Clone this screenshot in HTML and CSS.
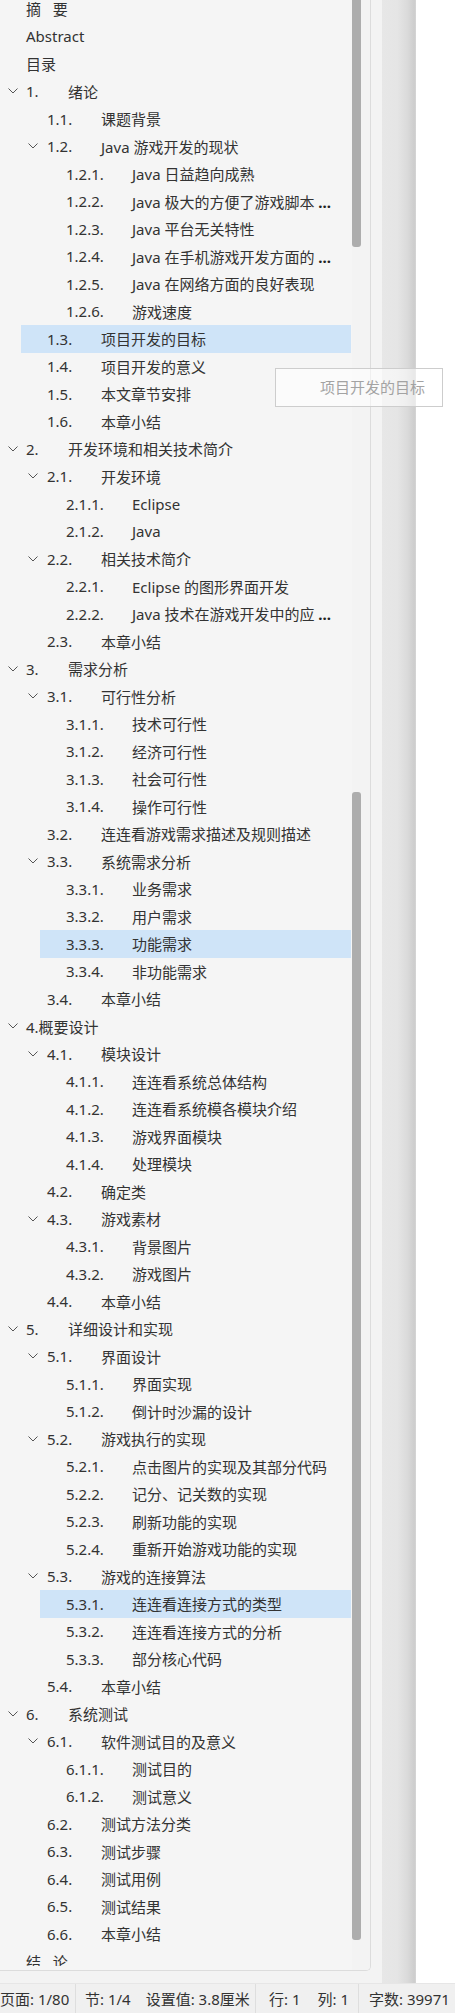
FILE: index.html
```html
<!DOCTYPE html>
<html lang="zh-CN">
<head>
  <meta charset="UTF-8">
  <title>导航窗格</title>
  <link rel="stylesheet" href="styles.css">
</head>
<body>
  <div class="main">
    <div class="left">
      <div class="panel">
        <div class="tree">
          <div class="row l0"><span class="title">摘&nbsp;&nbsp;&nbsp;要</span></div>
          <div class="row l0"><span class="title">Abstract</span></div>
          <div class="row l0"><span class="title">目录</span></div>
          <div class="row l1"><span class="chev"><svg width="10" height="6" viewBox="0 0 10 6"><path d="M0.5 0.5 L5 5 L9.5 0.5"/></svg></span><span class="num">1.</span><span class="title">绪论</span></div>
          <div class="row l2"><span class="chev"></span><span class="num">1.1.</span><span class="title">课题背景</span></div>
          <div class="row l2"><span class="chev"><svg width="10" height="6" viewBox="0 0 10 6"><path d="M0.5 0.5 L5 5 L9.5 0.5"/></svg></span><span class="num">1.2.</span><span class="title">Java 游戏开发的现状</span></div>
          <div class="row l3"><span class="chev"></span><span class="num">1.2.1.</span><span class="title">Java 日益趋向成熟</span></div>
          <div class="row l3"><span class="chev"></span><span class="num">1.2.2.</span><span class="title">Java 极大的方便了游戏脚本 <b>...</b></span></div>
          <div class="row l3"><span class="chev"></span><span class="num">1.2.3.</span><span class="title">Java 平台无关特性</span></div>
          <div class="row l3"><span class="chev"></span><span class="num">1.2.4.</span><span class="title">Java 在手机游戏开发方面的 <b>...</b></span></div>
          <div class="row l3"><span class="chev"></span><span class="num">1.2.5.</span><span class="title">Java 在网络方面的良好表现</span></div>
          <div class="row l3"><span class="chev"></span><span class="num">1.2.6.</span><span class="title">游戏速度</span></div>
          <div class="row l2 sel"><span class="chev"></span><span class="num">1.3.</span><span class="title">项目开发的目标</span></div>
          <div class="row l2"><span class="chev"></span><span class="num">1.4.</span><span class="title">项目开发的意义</span></div>
          <div class="row l2"><span class="chev"></span><span class="num">1.5.</span><span class="title">本文章节安排</span></div>
          <div class="row l2"><span class="chev"></span><span class="num">1.6.</span><span class="title">本章小结</span></div>
          <div class="row l1"><span class="chev"><svg width="10" height="6" viewBox="0 0 10 6"><path d="M0.5 0.5 L5 5 L9.5 0.5"/></svg></span><span class="num">2.</span><span class="title">开发环境和相关技术简介</span></div>
          <div class="row l2"><span class="chev"><svg width="10" height="6" viewBox="0 0 10 6"><path d="M0.5 0.5 L5 5 L9.5 0.5"/></svg></span><span class="num">2.1.</span><span class="title">开发环境</span></div>
          <div class="row l3"><span class="chev"></span><span class="num">2.1.1.</span><span class="title">Eclipse</span></div>
          <div class="row l3"><span class="chev"></span><span class="num">2.1.2.</span><span class="title">Java</span></div>
          <div class="row l2"><span class="chev"><svg width="10" height="6" viewBox="0 0 10 6"><path d="M0.5 0.5 L5 5 L9.5 0.5"/></svg></span><span class="num">2.2.</span><span class="title">相关技术简介</span></div>
          <div class="row l3"><span class="chev"></span><span class="num">2.2.1.</span><span class="title">Eclipse 的图形界面开发</span></div>
          <div class="row l3"><span class="chev"></span><span class="num">2.2.2.</span><span class="title">Java 技术在游戏开发中的应 <b>...</b></span></div>
          <div class="row l2"><span class="chev"></span><span class="num">2.3.</span><span class="title">本章小结</span></div>
          <div class="row l1"><span class="chev"><svg width="10" height="6" viewBox="0 0 10 6"><path d="M0.5 0.5 L5 5 L9.5 0.5"/></svg></span><span class="num">3.</span><span class="title">需求分析</span></div>
          <div class="row l2"><span class="chev"><svg width="10" height="6" viewBox="0 0 10 6"><path d="M0.5 0.5 L5 5 L9.5 0.5"/></svg></span><span class="num">3.1.</span><span class="title">可行性分析</span></div>
          <div class="row l3"><span class="chev"></span><span class="num">3.1.1.</span><span class="title">技术可行性</span></div>
          <div class="row l3"><span class="chev"></span><span class="num">3.1.2.</span><span class="title">经济可行性</span></div>
          <div class="row l3"><span class="chev"></span><span class="num">3.1.3.</span><span class="title">社会可行性</span></div>
          <div class="row l3"><span class="chev"></span><span class="num">3.1.4.</span><span class="title">操作可行性</span></div>
          <div class="row l2"><span class="chev"></span><span class="num">3.2.</span><span class="title">连连看游戏需求描述及规则描述</span></div>
          <div class="row l2"><span class="chev"><svg width="10" height="6" viewBox="0 0 10 6"><path d="M0.5 0.5 L5 5 L9.5 0.5"/></svg></span><span class="num">3.3.</span><span class="title">系统需求分析</span></div>
          <div class="row l3"><span class="chev"></span><span class="num">3.3.1.</span><span class="title">业务需求</span></div>
          <div class="row l3"><span class="chev"></span><span class="num">3.3.2.</span><span class="title">用户需求</span></div>
          <div class="row l3 sel"><span class="chev"></span><span class="num">3.3.3.</span><span class="title">功能需求</span></div>
          <div class="row l3"><span class="chev"></span><span class="num">3.3.4.</span><span class="title">非功能需求</span></div>
          <div class="row l2"><span class="chev"></span><span class="num">3.4.</span><span class="title">本章小结</span></div>
          <div class="row l1"><span class="chev"><svg width="10" height="6" viewBox="0 0 10 6"><path d="M0.5 0.5 L5 5 L9.5 0.5"/></svg></span><span class="title">4.概要设计</span></div>
          <div class="row l2"><span class="chev"><svg width="10" height="6" viewBox="0 0 10 6"><path d="M0.5 0.5 L5 5 L9.5 0.5"/></svg></span><span class="num">4.1.</span><span class="title">模块设计</span></div>
          <div class="row l3"><span class="chev"></span><span class="num">4.1.1.</span><span class="title">连连看系统总体结构</span></div>
          <div class="row l3"><span class="chev"></span><span class="num">4.1.2.</span><span class="title">连连看系统模各模块介绍</span></div>
          <div class="row l3"><span class="chev"></span><span class="num">4.1.3.</span><span class="title">游戏界面模块</span></div>
          <div class="row l3"><span class="chev"></span><span class="num">4.1.4.</span><span class="title">处理模块</span></div>
          <div class="row l2"><span class="chev"></span><span class="num">4.2.</span><span class="title">确定类</span></div>
          <div class="row l2"><span class="chev"><svg width="10" height="6" viewBox="0 0 10 6"><path d="M0.5 0.5 L5 5 L9.5 0.5"/></svg></span><span class="num">4.3.</span><span class="title">游戏素材</span></div>
          <div class="row l3"><span class="chev"></span><span class="num">4.3.1.</span><span class="title">背景图片</span></div>
          <div class="row l3"><span class="chev"></span><span class="num">4.3.2.</span><span class="title">游戏图片</span></div>
          <div class="row l2"><span class="chev"></span><span class="num">4.4.</span><span class="title">本章小结</span></div>
          <div class="row l1"><span class="chev"><svg width="10" height="6" viewBox="0 0 10 6"><path d="M0.5 0.5 L5 5 L9.5 0.5"/></svg></span><span class="num">5.</span><span class="title">详细设计和实现</span></div>
          <div class="row l2"><span class="chev"><svg width="10" height="6" viewBox="0 0 10 6"><path d="M0.5 0.5 L5 5 L9.5 0.5"/></svg></span><span class="num">5.1.</span><span class="title">界面设计</span></div>
          <div class="row l3"><span class="chev"></span><span class="num">5.1.1.</span><span class="title">界面实现</span></div>
          <div class="row l3"><span class="chev"></span><span class="num">5.1.2.</span><span class="title">倒计时沙漏的设计</span></div>
          <div class="row l2"><span class="chev"><svg width="10" height="6" viewBox="0 0 10 6"><path d="M0.5 0.5 L5 5 L9.5 0.5"/></svg></span><span class="num">5.2.</span><span class="title">游戏执行的实现</span></div>
          <div class="row l3"><span class="chev"></span><span class="num">5.2.1.</span><span class="title">点击图片的实现及其部分代码</span></div>
          <div class="row l3"><span class="chev"></span><span class="num">5.2.2.</span><span class="title">记分、记关数的实现</span></div>
          <div class="row l3"><span class="chev"></span><span class="num">5.2.3.</span><span class="title">刷新功能的实现</span></div>
          <div class="row l3"><span class="chev"></span><span class="num">5.2.4.</span><span class="title">重新开始游戏功能的实现</span></div>
          <div class="row l2"><span class="chev"><svg width="10" height="6" viewBox="0 0 10 6"><path d="M0.5 0.5 L5 5 L9.5 0.5"/></svg></span><span class="num">5.3.</span><span class="title">游戏的连接算法</span></div>
          <div class="row l3 sel"><span class="chev"></span><span class="num">5.3.1.</span><span class="title">连连看连接方式的类型</span></div>
          <div class="row l3"><span class="chev"></span><span class="num">5.3.2.</span><span class="title">连连看连接方式的分析</span></div>
          <div class="row l3"><span class="chev"></span><span class="num">5.3.3.</span><span class="title">部分核心代码</span></div>
          <div class="row l2"><span class="chev"></span><span class="num">5.4.</span><span class="title">本章小结</span></div>
          <div class="row l1"><span class="chev"><svg width="10" height="6" viewBox="0 0 10 6"><path d="M0.5 0.5 L5 5 L9.5 0.5"/></svg></span><span class="num">6.</span><span class="title">系统测试</span></div>
          <div class="row l2"><span class="chev"><svg width="10" height="6" viewBox="0 0 10 6"><path d="M0.5 0.5 L5 5 L9.5 0.5"/></svg></span><span class="num">6.1.</span><span class="title">软件测试目的及意义</span></div>
          <div class="row l3"><span class="chev"></span><span class="num">6.1.1.</span><span class="title">测试目的</span></div>
          <div class="row l3"><span class="chev"></span><span class="num">6.1.2.</span><span class="title">测试意义</span></div>
          <div class="row l2"><span class="chev"></span><span class="num">6.2.</span><span class="title">测试方法分类</span></div>
          <div class="row l2"><span class="chev"></span><span class="num">6.3.</span><span class="title">测试步骤</span></div>
          <div class="row l2"><span class="chev"></span><span class="num">6.4.</span><span class="title">测试用例</span></div>
          <div class="row l2"><span class="chev"></span><span class="num">6.5.</span><span class="title">测试结果</span></div>
          <div class="row l2"><span class="chev"></span><span class="num">6.6.</span><span class="title">本章小结</span></div>
          <div class="row l0"><span class="title">结&nbsp;&nbsp;&nbsp;论</span></div>
        </div>
        <div class="track">
          <div class="thumb thumb-a"></div>
          <div class="thumb thumb-b"></div>
        </div>
      </div>
    </div>
    <div class="strip"></div>
    <div class="shade"></div>
    <div class="doc"></div>
  </div>
  <div class="status">
    <span class="seg seg1">页面: 1/80</span>
    <span class="seg seg2"><span class="item">节: 1/4</span><span class="item">设置值: 3.8厘米</span></span>
    <span class="seg seg3"><span class="item">行: 1</span><span class="item">列: 1</span></span>
    <span class="seg seg4">字数: 39971</span>
  </div>
  <div class="tooltip">项目开发的目标</div>
</body>
</html>
```

FILE: styles.css
```css
body { margin: 0; width: 455px; height: 2013px; overflow: hidden; position: relative; font-family: "Noto Sans", "Noto Sans CJK SC", sans-serif; font-size: 15px; color: #333; background: #fff; }
.main { display: flex; height: 1983px; }
.left { width: 371px; background: #f3f3f3; }
.panel { display: flex; align-items: flex-start; height: 1971px; background: #f5f5f5; border-right: 1px solid #dcdcdc; border-bottom: 1px solid #dcdcdc; border-bottom-right-radius: 5px; overflow: hidden; box-sizing: border-box; }
.tree { width: 352px; height: 1971px; margin-top: -5px; overflow: hidden; flex: none; }
.row { display: flex; align-items: center; height: 27.5px; margin-right: 1px; white-space: nowrap; }
.row.sel { background: #cfe4f8; }
.l0 { padding-left: 26px; }
.l1 { padding-left: 0; }
.l2 { margin-left: 21px; }
.l3 { margin-left: 40px; }
.chev { width: 26px; flex: none; display: flex; align-items: center; }
.l1 .chev { padding-left: 8px; box-sizing: border-box; }
.l2 .chev { padding-left: 7px; box-sizing: border-box; }
.chev svg { display: block; }
.chev path { fill: none; stroke: #555; stroke-width: 1; }
.num { flex: none; }
.l1 .num { width: 42px; }
.l2 .num { width: 54px; }
.l3 .num { width: 66px; }
.title b { font-weight: bold; color: #222; }
.track { width: 18px; height: 100%; background: #f3f3f3; }
.thumb { width: 9px; background: #adadad; border-radius: 3px; }
.thumb-a { height: 251px; margin-top: -4px; }
.thumb-b { height: 1148px; margin-top: 545px; }
.strip { width: 11px; background: #f3f3f3; }
.shade { width: 34px; background: linear-gradient(to right, #e7e7e7 0%, #e5e5e5 45%, #dadada 75%, #cdcdcd 95%, #d6d6d6 100%); }
.doc { flex: 1; background: #fff; }
.status { display: flex; height: 30px; background: #f0f0f0; border-top: 1px solid #e6e6e6; box-sizing: border-box; align-items: stretch; white-space: nowrap; }
.seg { display: flex; align-items: center; box-sizing: border-box; }
.seg + .seg { border-left: 1px solid #dedede; }
.seg1 { width: 75px; }
.seg2 { width: 180px; padding-left: 9px; gap: 15px; }
.seg3 { width: 103px; padding-left: 13px; gap: 17px; }
.seg4 { flex: 1; padding-left: 10px; }
.tooltip { position: absolute; left: 275px; top: 368px; width: 168px; height: 39px; box-sizing: border-box; padding-left: 44px; line-height: 37px; border: 1px solid #cdcdcd; background: rgba(255, 255, 255, 0.55); color: #a3a3a3; white-space: nowrap; }
```
